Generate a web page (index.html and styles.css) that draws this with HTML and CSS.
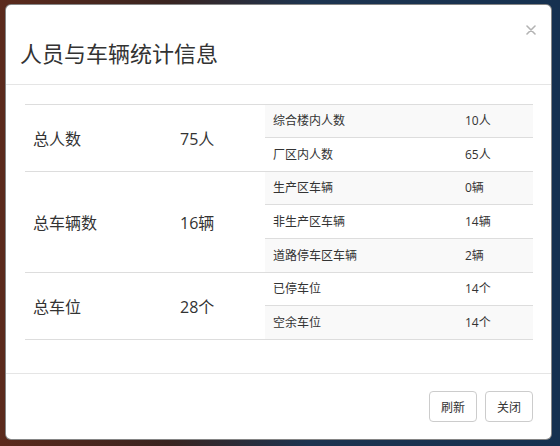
FILE: index.html
```html
<!DOCTYPE html>
<html lang="zh-CN">
<head>
<meta charset="utf-8">
<title>人员与车辆统计信息</title>
<link rel="stylesheet" href="styles.css">
</head>
<body>
<div class="modal">
  <div class="modal-header">
    <h4 class="modal-title">人员与车辆统计信息</h4>
    <span class="close" aria-label="关闭">
      <svg width="10" height="10" viewBox="0 0 10 10"><path d="M1 1 L9 9 M9 1 L1 9" stroke="#b3b3b3" stroke-width="1.6" stroke-linecap="round"/></svg>
    </span>
  </div>
  <div class="modal-body">
    <div class="stats">
      <div class="group">
        <div class="g-label">总人数</div>
        <div class="g-value">75人</div>
        <div class="sub">
          <div class="row odd"><span class="s-label">综合楼内人数</span><span class="s-value">10人</span></div>
          <div class="row"><span class="s-label">厂区内人数</span><span class="s-value">65人</span></div>
        </div>
      </div>
      <div class="group">
        <div class="g-label">总车辆数</div>
        <div class="g-value">16辆</div>
        <div class="sub">
          <div class="row odd"><span class="s-label">生产区车辆</span><span class="s-value">0辆</span></div>
          <div class="row"><span class="s-label">非生产区车辆</span><span class="s-value">14辆</span></div>
          <div class="row odd"><span class="s-label">道路停车区车辆</span><span class="s-value">2辆</span></div>
        </div>
      </div>
      <div class="group">
        <div class="g-label">总车位</div>
        <div class="g-value">28个</div>
        <div class="sub">
          <div class="row"><span class="s-label">已停车位</span><span class="s-value">14个</span></div>
          <div class="row odd"><span class="s-label">空余车位</span><span class="s-value">14个</span></div>
        </div>
      </div>
    </div>
  </div>
  <div class="modal-footer">
    <button class="btn">刷新</button>
    <button class="btn">关闭</button>
  </div>
</div>
</body>
</html>
```
FILE: styles.css
```css
html, body {
  margin: 0;
  padding: 0;
}
body {
  width: 560px;
  height: 446px;
  overflow: hidden;
  background:
    linear-gradient(90deg, #5b2a1c 0%, #3a2420 30%, #1d3450 55%, #163150 100%);
  font-family: "Open Sans", "Noto Sans CJK SC", sans-serif;
  color: #333;
  padding: 4px 8px 6px 5px;
  box-sizing: border-box;
}
.modal {
  position: relative;
  width: 547px;
  height: 436px;
  box-sizing: border-box;
  background: #fff;
  border: 1px solid rgba(120, 120, 120, 0.9);
  border-radius: 6px;
  display: flex;
  flex-direction: column;
}
.modal-header {
  padding: 32px 14px 17px;
  border-bottom: 1px solid #e5e5e5;
}
.modal-title {
  margin: 0;
  font-family: "Noto Sans CJK SC", sans-serif;
  font-weight: normal;
  font-size: 22px;
  line-height: 30px;
  color: #333;
}
.close {
  position: absolute;
  top: 20px;
  right: 15px;
  display: block;
  width: 10px;
  height: 10px;
}
.close svg {
  display: block;
}
.modal-body {
  flex: 1;
  padding: 19px 18px 0 19px;
}
.stats {
  border-bottom: 1px solid #ddd;
}
.group {
  display: grid;
  grid-template-columns: 147px 93px 1fr;
  border-top: 1px solid #ddd;
}
.g-label, .g-value {
  display: flex;
  align-items: center;
  font-size: 16px;
  padding-left: 8px;
  color: #333;
}
.sub .row {
  display: grid;
  grid-template-columns: 192px 1fr;
  font-size: 12px;
  line-height: 17px;
  height: 34px;
  box-sizing: border-box;
  padding: 8px 0;
  border-top: 1px solid #ddd;
}
.sub .row:first-child {
  border-top: none;
  height: 32px;
  padding-top: 7px;
}
.sub .row.odd {
  background: #f9f9f9;
}
.s-label, .s-value {
  padding-left: 8px;
}
.modal-footer {
  border-top: 1px solid #e5e5e5;
  padding: 17px 18px 17px 0;
  display: flex;
  justify-content: flex-end;
  gap: 8px;
}
.btn {
  font-family: "Noto Sans CJK SC", sans-serif;
  font-size: 12px;
  line-height: 17px;
  padding: 6px 11px;
  background: #fff;
  color: #333;
  border: 1px solid #ccc;
  border-radius: 4px;
}
```
